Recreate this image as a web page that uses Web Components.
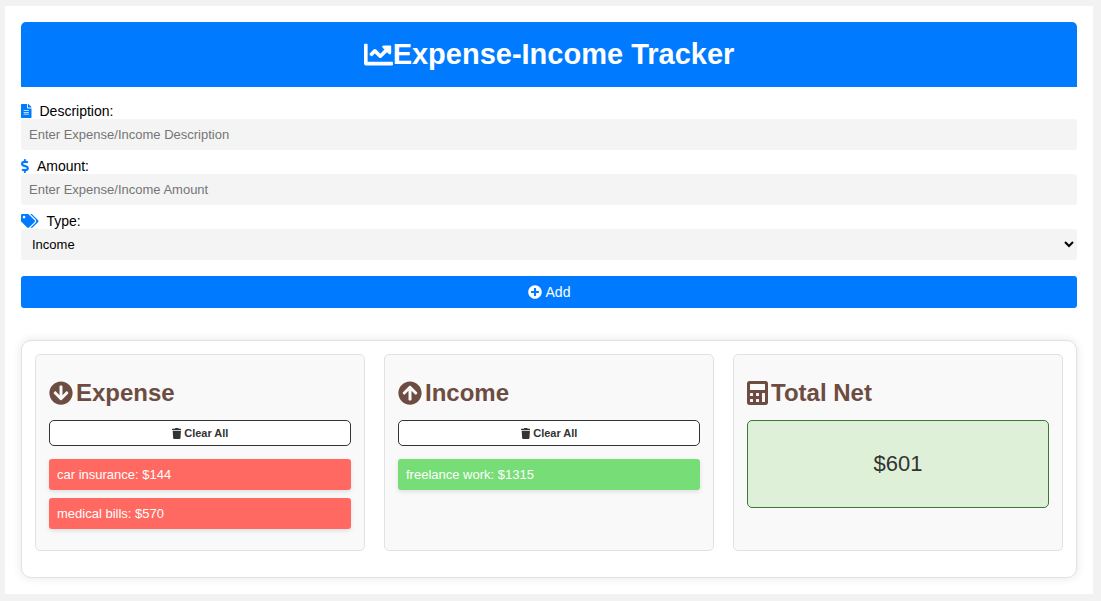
<!DOCTYPE html>
<html lang="en">
<head>
<meta charset="utf-8">
<title>Expense-Income Tracker</title>
<style>
body{margin:6px 8px 6px 5px;background:#f2f2f2;font-family:"Liberation Sans",Arial,sans-serif;font-size:14px;color:#000}
</style>
</head>
<body>
<tracker-app></tracker-app>
<script>
const ICONS = {
  chart:[512,'M496 384H64V80c0-8.84-7.16-16-16-16H16C7.16 64 0 71.16 0 80v336c0 17.67 14.33 32 32 32h464c8.84 0 16-7.16 16-16v-32c0-8.84-7.16-16-16-16zM464 96H345.94c-21.38 0-32.09 25.85-16.97 40.97l32.4 32.4L288 242.75l-73.37-73.37c-12.5-12.5-32.76-12.5-45.25 0l-68.69 68.69c-6.25 6.25-6.25 16.38 0 22.63l22.62 22.62c6.25 6.25 16.38 6.25 22.63 0L192 237.25l73.37 73.37c12.5 12.5 32.76 12.5 45.25 0l96-96 32.4 32.4c15.12 15.12 40.97 4.41 40.97-16.97V112c.01-8.84-7.15-16-15.99-16z'],
  file:[384,'M224 136V0H24C10.7 0 0 10.7 0 24v464c0 13.3 10.7 24 24 24h336c13.3 0 24-10.7 24-24V160H248c-13.2 0-24-10.8-24-24zm64 236c0 6.6-5.4 12-12 12H108c-6.6 0-12-5.4-12-12v-8c0-6.6 5.4-12 12-12h168c6.6 0 12 5.4 12 12v8zm0-64c0 6.6-5.4 12-12 12H108c-6.6 0-12-5.4-12-12v-8c0-6.6 5.4-12 12-12h168c6.6 0 12 5.4 12 12v8zm0-72v8c0 6.6-5.4 12-12 12H108c-6.6 0-12-5.4-12-12v-8c0-6.6 5.4-12 12-12h168c6.6 0 12 5.4 12 12zm96-114.1v6.1H256V0h6.1c6.4 0 12.5 2.5 17 7l97.9 98c4.5 4.5 7 10.6 7 16.9z'],
  dollar:[288,'M209.2 233.4l-108-31.6C88.7 198.2 80 186.5 80 173.5c0-16.3 13.2-29.5 29.5-29.5h66.3c12.2 0 24.2 3.7 34.2 10.5 6.1 4.1 14.3 3.1 19.5-2l34.8-34c7.1-6.9 6.1-18.4-1.8-24.5C238 74.8 207.4 64.1 176 64V16c0-8.8-7.2-16-16-16h-32c-8.8 0-16 7.2-16 16v48h-2.5C45.8 64-5.4 118.7.5 183.6c4.2 46.1 39.4 83.6 83.8 96.6l102.5 30c12.5 3.7 21.2 15.3 21.2 28.3 0 16.3-13.2 29.5-29.5 29.5h-66.3C100 368 88 364.3 78 357.5c-6.1-4.1-14.3-3.1-19.5 2l-34.8 34c-7.1 6.9-6.1 18.4 1.8 24.5 24.5 19.2 55.1 29.9 86.5 30v48c0 8.8 7.2 16 16 16h32c8.8 0 16-7.2 16-16v-48.2c46.6-.9 90.3-28.6 105.7-72.7 21.5-61.6-14.6-124.8-72.5-141.7z'],
  tags:[640,'M497.941 225.941L286.059 14.059A48 48 0 0 0 252.118 0H48C21.49 0 0 21.49 0 48v204.118a48 48 0 0 0 14.059 33.941l211.882 211.882c18.744 18.745 49.136 18.746 67.882 0l204.118-204.118c18.745-18.745 18.745-49.137 0-67.882zM112 160c-26.51 0-48-21.49-48-48s21.49-48 48-48 48 21.49 48 48-21.49 48-48 48zm513.941 133.823L421.823 497.941c-18.745 18.745-49.137 18.745-67.882 0l-.36-.36L527.64 323.522c16.999-16.999 26.362-39.6 26.362-63.64s-9.362-46.641-26.362-63.64L331.397 0h48.721a48 48 0 0 1 33.941 14.059l211.882 211.882c18.745 18.745 18.745 49.137 0 67.882z'],
  plus:[512,'M256 8C119 8 8 119 8 256s111 248 248 248 248-111 248-248S393 8 256 8zm144 276c0 6.6-5.4 12-12 12h-92v92c0 6.6-5.4 12-12 12h-56c-6.6 0-12-5.4-12-12v-92h-92c-6.6 0-12-5.4-12-12v-56c0-6.6 5.4-12 12-12h92v-92c0-6.6 5.4-12 12-12h56c6.6 0 12 5.4 12 12v92h92c6.6 0 12 5.4 12 12v56z'],
  down:[512,'M504 256c0 137-111 248-248 248S8 393 8 256 119 8 256 8s248 111 248 248zm-143.6-28.9L288 302.6V120c0-13.3-10.7-24-24-24h-16c-13.3 0-24 10.7-24 24v182.6l-72.4-75.5c-9.3-9.7-24.8-9.9-34.3-.4l-10.9 11c-9.4 9.4-9.4 24.6 0 33.9L239 404.3c9.4 9.4 24.6 9.4 33.9 0l132.7-132.7c9.4-9.4 9.4-24.6 0-33.9l-10.9-11c-9.5-9.5-25-9.3-34.3.4z'],
  up:[512,'M8 256C8 119 119 8 256 8s248 111 248 248-111 248-248 248S8 393 8 256zm143.6 28.9l72.4-75.5V392c0 13.3 10.7 24 24 24h16c13.3 0 24-10.7 24-24V209.4l72.4 75.5c9.3 9.7 24.8 9.9 34.3.4l10.9-11c9.4-9.4 9.4-24.6 0-33.9L273 107.7c-9.4-9.4-24.6-9.4-33.9 0L106.3 240.4c-9.4 9.4-9.4 24.6 0 33.9l10.9 11c9.6 9.5 25.1 9.3 34.4-.4z'],
  trash:[448,'M432 32H312l-9.4-18.7A24 24 0 0 0 281.1 0H166.8a23.72 23.72 0 0 0-21.4 13.3L136 32H16A16 16 0 0 0 0 48v32a16 16 0 0 0 16 16h416a16 16 0 0 0 16-16V48a16 16 0 0 0-16-16zM53.2 467a48 48 0 0 0 47.9 45h245.8a48 48 0 0 0 47.9-45L416 128H32z'],
  calc:[448,'M400 0H48C22.4 0 0 22.4 0 48v416c0 25.6 22.4 48 48 48h352c25.6 0 48-22.4 48-48V48c0-25.6-22.4-48-48-48zM64 77q0-13 13-13h294q13 0 13 13v102q0 13-13 13H77q-13 0-13-13zM64 269q0-13 13-13h38q13 0 13 13v38q0 13-13 13H77q-13 0-13-13zM192 269q0-13 13-13h38q13 0 13 13v38q0 13-13 13h-38q-13 0-13-13zM64 397q0-13 13-13h38q13 0 13 13v38q0 13-13 13H77q-13 0-13-13zM192 397q0-13 13-13h38q13 0 13 13v38q0 13-13 13h-38q-13 0-13-13zM320 269q0-13 13-13h38q13 0 13 13v166q0 13-13 13h-38q-13 0-13-13z']
};

class Base extends HTMLElement {
  constructor() { super(); this.attachShadow({mode:'open'}); }
  connectedCallback() { this.shadowRoot.innerHTML = this.view(); }
  attr(name) { return this.getAttribute(name) || ''; }
}

customElements.define('ui-icon', class extends Base {
  view() {
    const [w, d] = ICONS[this.attr('name')];
    return `<style>:host{display:inline-flex;flex:none;height:1em}svg{display:block;height:1em;fill:currentColor}</style>
    <svg viewBox="0 0 ${w} 512" style="width:${w / 512}em" aria-hidden="true"><path fill-rule="evenodd" d="${d}"/></svg>`;
  }
});

customElements.define('page-banner', class extends Base {
  view() {
    return `<style>
    :host{display:block;background:#007bff;color:#fff;border-radius:5px 5px 0 0;padding:16px}
    h1{margin:0;display:flex;align-items:center;justify-content:center;font-size:29px;line-height:33px}
    </style><h1><ui-icon name="chart"></ui-icon><slot></slot></h1>`;
  }
});

customElements.define('form-field', class extends Base {
  view() {
    const control = this.hasAttribute('options')
      ? `<select id="c">${this.attr('options').split(',').map(o => `<option>${o}</option>`).join('')}</select>`
      : `<input id="c" type="${this.attr('type') || 'text'}" placeholder="${this.attr('placeholder')}">`;
    return `<style>
    :host{display:block}
    label{display:flex;align-items:center;gap:8px;line-height:16px}
    ui-icon{color:#007bff}
    input,select{display:block;box-sizing:border-box;width:100%;height:31px;margin:0;padding:8px;border:0;border-radius:3px;background:#f4f4f4;color:#000;font:13px/15px "Liberation Sans",Arial,sans-serif}
    select{padding:0 0 0 7px}
    input::placeholder{color:#757575}
    </style><label for="c"><ui-icon name="${this.attr('icon')}"></ui-icon><span>${this.attr('label')}</span></label>${control}`;
  }
});

customElements.define('entry-form', class extends Base {
  view() {
    return `<style>
    :host{display:block}
    form{display:flex;flex-direction:column;gap:8px;margin:0}
    button{display:flex;align-items:center;justify-content:center;gap:4px;width:100%;height:32px;margin:8px 0 0;padding:0;border:0;border-radius:3px;background:#007bff;color:#fff;font:14px/16px "Liberation Sans",Arial,sans-serif}
    </style><form>
    <form-field icon="file" label="Description:" placeholder="Enter Expense/Income Description"></form-field>
    <form-field icon="dollar" label="Amount:" type="number" placeholder="Enter Expense/Income Amount"></form-field>
    <form-field icon="tags" label="Type:" options="Income,Expense"></form-field>
    <button type="button"><ui-icon name="plus"></ui-icon>Add</button></form>`;
  }
});

customElements.define('summary-card', class extends Base {
  view() {
    return `<style>
    :host{display:block;background:#f9f9f9;border:1px solid #e2e2e2;border-radius:5px;padding:13px}
    h2{display:flex;align-items:center;gap:3px;margin:11px 0 13px;color:#6d4c41;font-size:24px;line-height:28px}
    </style><h2><ui-icon name="${this.attr('icon')}"></ui-icon>${this.attr('heading')}</h2><slot></slot>`;
  }
});

customElements.define('clear-button', class extends Base {
  view() {
    return `<style>
    :host{display:block;margin-bottom:13px}
    button{display:flex;align-items:center;justify-content:center;gap:3px;box-sizing:border-box;width:100%;height:26px;padding:0;border:1px solid #333;border-radius:5px;background:#fff;color:#333;font:bold 11px/13px "Liberation Sans",Arial,sans-serif}
    </style><button type="button"><ui-icon name="trash"></ui-icon><slot></slot></button>`;
  }
});

customElements.define('entry-list', class extends Base {
  view() {
    return `<style>
    :host{display:block}
    :host([kind=expense]){--fill:#ff6961}
    :host([kind=income]){--fill:#77dd77}
    ul{list-style:none;margin:0;padding:0}
    li{margin-bottom:8px;padding:8px;border-radius:3px;background:var(--fill);color:#fff;font-size:13px;line-height:15px;box-shadow:0 2px 4px rgba(0,0,0,.1)}
    </style><ul>${this.attr('items').split('|').map(i => `<li>${i}</li>`).join('')}</ul>`;
  }
});

customElements.define('net-total', class extends Base {
  view() {
    return `<style>
    :host{display:block;padding:31px 8px;border:1px solid #3c763d;border-radius:5px;background:#dff0d8;color:#333;text-align:center;font-size:22px;line-height:24px}
    </style><slot></slot>`;
  }
});

customElements.define('tracker-app', class extends Base {
  view() {
    return `<style>
    :host{display:block;padding:16px;background:#fff;box-shadow:0 2px 8px rgba(0,0,0,.15)}
    page-banner{margin-bottom:16px}
    section{display:grid;grid-template-columns:repeat(3,minmax(0,1fr));gap:19px;margin-top:32px;padding:13px 13px 26px;border:1px solid #e2e2e2;border-radius:10px;background:#fff;box-shadow:0 0 10px rgba(0,0,0,.1)}
    </style>
    <page-banner>Expense-Income Tracker</page-banner>
    <entry-form></entry-form>
    <section>
      <summary-card icon="down" heading="Expense"><clear-button>Clear All</clear-button>
        <entry-list kind="expense" items="car insurance: $144|medical bills: $570"></entry-list></summary-card>
      <summary-card icon="up" heading="Income"><clear-button>Clear All</clear-button>
        <entry-list kind="income" items="freelance work: $1315"></entry-list></summary-card>
      <summary-card icon="calc" heading="Total Net"><net-total>$601</net-total></summary-card>
    </section>`;
  }
});
</script>
</body>
</html>
